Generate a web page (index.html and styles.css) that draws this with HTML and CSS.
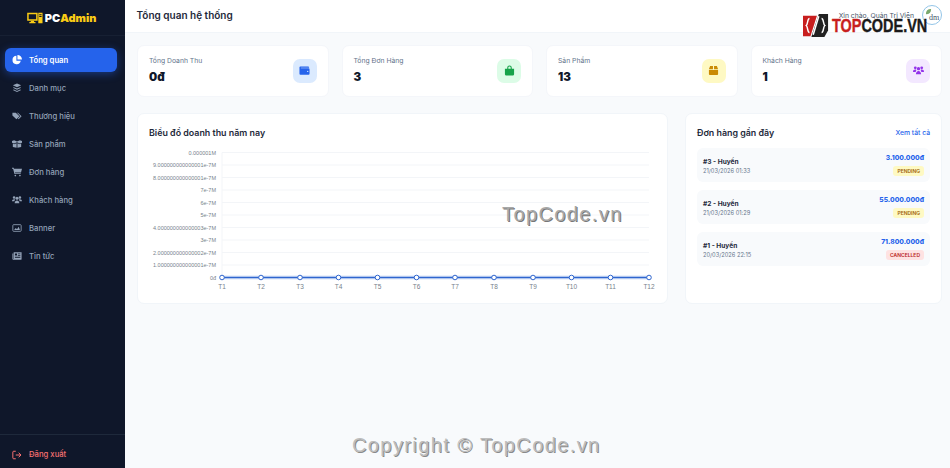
FILE: index.html
```html
<!DOCTYPE html>
<html lang="vi">
<head>
<meta charset="utf-8">
<title>PCAdmin</title>
<link rel="stylesheet" href="styles.css">
</head>
<body>
<div class="app">
  <aside class="sidebar">
    <div class="brand">
      <svg class="brand-icon" viewBox="0 0 17 12"><path fill="none" stroke="#facc15" stroke-width="1.6" d="M1 1.300h9.500v6.800H1z"/><path fill="#facc15" d="M4 9h3.500v1.300H9v1.200H2.500v-1.200H4zM12 .5h4.500v11H12z"/><path fill="#0f172a" d="M13 2h2.500v1H13zM13 4h2.500v1H13z"/></svg>
      <span class="brand-pc">PC</span><span class="brand-admin">Admin</span>
    </div>
    <nav class="nav">
      <a class="nav-item active"><svg class="nav-icon" viewBox="0 0 12 12"><path fill="currentColor" d="M5.300 1a5 5 0 1 0 5.200 6H5.300zM6.500 0v5.500H12A5.600 5.600 0 0 0 6.500 0z"/></svg>Tổng quan</a>
      <a class="nav-item"><svg class="nav-icon" viewBox="0 0 12 12"><path fill="currentColor" d="M6 .5l5 2.300-5 2.300-5-2.300zM2.300 5L6 6.700 9.700 5 11 5.700 6 8 1 5.700zM2.300 7.800L6 9.500l3.700-1.700 1.300.7-5 2.300-5-2.300z"/></svg>Danh mục</a>
      <a class="nav-item"><svg class="nav-icon" viewBox="0 0 12 12"><path fill="currentColor" d="M.5 2h4l4.500 4.300-3.700 3.700L.5 5.500zM6 2h1l4.500 4.300L8 10l-1-.7 3-3z"/></svg>Thương hiệu</a>
      <a class="nav-item"><svg class="nav-icon" viewBox="0 0 12 12"><path fill="currentColor" d="M0 2.500L2.500 1.500 6 3l3.500-1.500L12 2.500v2L9.500 5.500 6 4 2.500 5.500 0 4.500zM1 5.500l1.500.8L5.500 5v5.500L1 9.500zM11 5.500l-1.500.8L6.500 5v5.500L11 9.500z"/></svg>Sản phẩm</a>
      <a class="nav-item"><svg class="nav-icon" viewBox="0 0 12 12"><path fill="currentColor" d="M0 1h2l.4 1H12l-1.200 4.500H3.500l.3 1H10.500v1H3L1.300 2H0z"/><circle fill="currentColor" cx="4" cy="10.300" r="1"/><circle fill="currentColor" cx="9.500" cy="10.300" r="1"/></svg>Đơn hàng</a>
      <a class="nav-item"><svg class="nav-icon" viewBox="0 0 12 12"><g fill="currentColor"><circle cx="2.500" cy="3" r="1.500"/><circle cx="9.500" cy="3" r="1.500"/><circle cx="6" cy="4" r="1.800"/><path d="M0 7.500C0 5.800 1 5 2.500 5c.5 0 1 .2 1.300.4-.5.500-.8 1.300-.8 2.100zM12 7.500c0-1.700-1-2.500-2.500-2.500-.5 0-1 .2-1.300.4.500.5.800 1.300.8 2.100zM3.200 10c0-2 1.200-3.500 2.800-3.500S8.800 8 8.800 10z"/></g></svg>Khách hàng</a>
      <a class="nav-item"><svg class="nav-icon" viewBox="0 0 12 12"><rect x="1" y="2" width="10" height="8" rx="1" fill="none" stroke="currentColor"/><path fill="currentColor" d="M2.500 8.500l2-2.500 1.500 1.500L8 4.500l1.500 4z"/></svg>Banner</a>
      <a class="nav-item"><svg class="nav-icon" viewBox="0 0 12 12"><path fill="currentColor" fill-rule="evenodd" d="M2 1.500h9.500v8a1 1 0 0 1-1 1H1.500A1.200 1.200 0 0 1 .5 9.300V3H1.500v6.500H2zM3.500 3v2.500H6V3zM7 3v1h3V3zM7 5v1h3V5zM3.500 7v1H10V7z"/></svg>Tin tức</a>
    </nav>
    <div class="logout">
      <a class="logout-link"><svg class="nav-icon" viewBox="0 0 12 12"><path fill="none" stroke="currentColor" stroke-width="1.200" d="M4.500 1.500H2a1 1 0 0 0-1 1v7a1 1 0 0 0 1 1h2.500M4.500 6H10.500M8 3.300L10.800 6 8 8.700"/></svg>Đăng xuất</a>
    </div>
  </aside>
  <div class="main">
    <header class="topbar">
      <h1 class="page-title">Tổng quan hệ thống</h1>
      <div class="user">
        <span class="hello">Xin chào, Quản Trị Viên</span>
        <span class="avatar"><svg class="leaf" viewBox="0 0 8 8"><path fill="#7aa86e" d="M1 7C1 3 3 1 7 1 7 5 5 7 1 7z"/></svg><span class="avatar-alt">dm</span></span>
      </div>
    </header>
    <div class="content">
      <section class="stats">
        <div class="stat"><div><div class="stat-label">Tổng Doanh Thu</div><div class="stat-value">0đ</div></div>
          <span class="stat-icon blue"><svg viewBox="0 0 12 12"><path fill="currentColor" d="M1.500 1.500h8.500a1 1 0 0 1 1 1V3H2v.5h8.500a1 1 0 0 1 1 1v5a1 1 0 0 1-1 1h-9a1 1 0 0 1-1-1v-7a1 1 0 0 1 1-1z"/><circle cx="9.500" cy="7" r=".7" fill="#dbeafe"/></svg></span></div>
        <div class="stat"><div><div class="stat-label">Tổng Đơn Hàng</div><div class="stat-value">3</div></div>
          <span class="stat-icon green"><svg viewBox="0 0 12 12"><path fill="currentColor" fill-rule="evenodd" d="M3.500 4V3a2.500 2.500 0 0 1 5 0v1H11v6a1.500 1.500 0 0 1-1.500 1.500h-7A1.500 1.500 0 0 1 1 10V4zM4.700 4h2.600V3a1.300 1.300 0 0 0-2.600 0z"/></svg></span></div>
        <div class="stat"><div><div class="stat-label">Sản Phẩm</div><div class="stat-value">13</div></div>
          <span class="stat-icon yellow"><svg viewBox="0 0 12 12"><path fill="currentColor" d="M2.300 1.200H5.400v3.300H1zM6.600 1.200h3.100L11 4.500H6.600zM1 5.500h10v4.300a1 1 0 0 1-1 1H2a1 1 0 0 1-1-1z"/></svg></span></div>
        <div class="stat"><div><div class="stat-label">Khách Hàng</div><div class="stat-value">1</div></div>
          <span class="stat-icon purple"><svg viewBox="0 0 12 12"><g fill="currentColor"><circle cx="2.500" cy="3" r="1.500"/><circle cx="9.500" cy="3" r="1.500"/><circle cx="6" cy="4" r="1.800"/><path d="M0 7.500C0 5.800 1 5 2.500 5c.5 0 1 .2 1.300.4-.5.500-.8 1.300-.8 2.100zM12 7.500c0-1.700-1-2.500-2.500-2.500-.5 0-1 .2-1.300.4.500.5.800 1.300.8 2.100zM3.200 10c0-2 1.200-3.500 2.800-3.500S8.800 8 8.800 10z"/></g></svg></span></div>
      </section>
      <section class="panels">
        <div class="panel chart-panel">
          <h2 class="panel-title">Biểu đồ doanh thu năm nay</h2>
          <svg class="chart" viewBox="0 0 531 152" width="531" height="152">
            <g class="grid">
              <path d="M85 14.500V139M85 14.500H512M85 27H512M85 39.500H512M85 52H512M85 64.500H512M85 77H512M85 89.500H512M85 102H512M85 114.500H512M85 127H512"/>
            </g>
            <g class="ylabels">
              <text x="79" y="16.500">0.000001M</text>
              <text x="79" y="29">9.000000000000001e-7M</text>
              <text x="79" y="41.500">8.000000000000001e-7M</text>
              <text x="79" y="54">7e-7M</text>
              <text x="79" y="66.500">6e-7M</text>
              <text x="79" y="79">5e-7M</text>
              <text x="79" y="91.500">4.000000000000003e-7M</text>
              <text x="79" y="104">3e-7M</text>
              <text x="79" y="116.500">2.000000000000002e-7M</text>
              <text x="79" y="129">1.000000000000001e-7M</text>
              <text x="79" y="141.500">0đ</text>
            </g>
            <g class="xlabels">
              <text x="85" y="150.500">T1</text><text x="124" y="150.500">T2</text><text x="163" y="150.500">T3</text><text x="201.500" y="150.500">T4</text><text x="240.500" y="150.500">T5</text><text x="279.500" y="150.500">T6</text><text x="318" y="150.500">T7</text><text x="357" y="150.500">T8</text><text x="396" y="150.500">T9</text><text x="434.500" y="150.500">T10</text><text x="473.500" y="150.500">T11</text><text x="512" y="150.500">T12</text>
            </g>
            <path class="line-halo" d="M85 139.500H512"/>
            <path class="line" d="M85 139.500H512"/>
            <g class="dots">
              <circle cx="85" cy="139.500" r="2.300"/><circle cx="124" cy="139.500" r="2.300"/><circle cx="163" cy="139.500" r="2.300"/><circle cx="201.500" cy="139.500" r="2.300"/><circle cx="240.500" cy="139.500" r="2.300"/><circle cx="279.500" cy="139.500" r="2.300"/><circle cx="318" cy="139.500" r="2.300"/><circle cx="357" cy="139.500" r="2.300"/><circle cx="396" cy="139.500" r="2.300"/><circle cx="434.500" cy="139.500" r="2.300"/><circle cx="473.500" cy="139.500" r="2.300"/><circle cx="512" cy="139.500" r="2.300"/>
            </g>
          </svg>
        </div>
        <div class="panel orders-panel">
          <div class="orders-head"><h2 class="panel-title">Đơn hàng gần đây</h2><a class="see-all">Xem tất cả</a></div>
          <div class="orders">
            <div class="order"><div class="order-left"><div class="order-name">#3 - Huyền</div><div class="order-date">21/03/2026 01:33</div></div><div class="order-right"><div class="order-total">3.100.000đ</div><span class="badge pending">PENDING</span></div></div>
            <div class="order"><div class="order-left"><div class="order-name">#2 - Huyền</div><div class="order-date">21/03/2026 01:29</div></div><div class="order-right"><div class="order-total">55.000.000đ</div><span class="badge pending">PENDING</span></div></div>
            <div class="order"><div class="order-left"><div class="order-name">#1 - Huyền</div><div class="order-date">20/03/2026 22:15</div></div><div class="order-right"><div class="order-total">71.800.000đ</div><span class="badge cancelled">CANCELLED</span></div></div>
          </div>
        </div>
      </section>
    </div>
  </div>
</div>
<div class="wm-logo">
  <svg class="wm-mark" viewBox="0 0 28 25"><path fill="#c81e1e" d="M0 2h15L8 24H0z"/><path fill="#222" d="M17 0h10v18l-4 7H9z"/><path fill="none" stroke="#fff" stroke-width="1.600" d="M7 5C4.500 5 5.500 11 3.500 12.500 5.500 14 4.500 20 7 20M17 2.500l-6 20M20 5c2.500 0 1.500 6 3.500 7.500-2 1.500-1 7.500-3.500 7.500"/></svg>
  <span class="wm-text"><span class="wm-top">TOP</span><span class="wm-code">CODE.VN</span></span>
</div>
<div class="wm-mid">TopCode.vn</div>
<div class="wm-bottom">Copyright © TopCode.vn</div>
</body>
</html>
```

FILE: styles.css
```css
* { box-sizing: border-box; margin: 0; padding: 0; }
html, body { height: 100%; overflow: hidden; }
body { font-family: Inter, "Liberation Sans", sans-serif; background: #f8fafc; color: #1e293b; }
.app { display: flex; height: 468px; width: 950px; }

.sidebar { width: 125px; flex: none; background: #0f172a; display: flex; flex-direction: column; }
.brand { height: 36px; display: flex; align-items: center; justify-content: center; font-size: 11px; font-weight: 900; border-bottom: 1px solid #172033; padding-right: 2px; }
.brand-icon { width: 16px; height: 12px; margin-right: 2px; }
.brand-pc { color: #fff; }
.brand-admin { color: #facc15; }
.nav { display: flex; flex-direction: column; gap: 4px; padding: 12px 8px 0 5px; flex: 1; }
.nav-item { height: 24px; display: flex; align-items: center; gap: 7px; padding-left: 7px; border-radius: 6px; font-size: 7.700px; font-weight: 500; color: #94a3b8; }
.nav-item.active { background: #2563eb; color: #fff; font-weight: 600; box-shadow: 0 2px 8px rgba(37, 99, 235, .45); }
.nav-icon { width: 10px; height: 10px; flex: none; }
.logout { border-top: 1px solid #1e293b; height: 34px; padding: 6px 0 0 12px; display: flex; align-items: center; }
.logout-link { display: flex; align-items: center; gap: 7px; font-size: 7.700px; font-weight: 500; color: #f87171; }

.main { flex: 1; display: flex; flex-direction: column; min-width: 0; }
.topbar { height: 33px; background: #fff; border-bottom: 1px solid #f1f5f9; display: flex; align-items: center; justify-content: space-between; padding: 0 8px 2px 11.500px; flex: none; }
.page-title { font-size: 10px; font-weight: 600; color: #1e293b; }
.user { display: flex; align-items: flex-start; gap: 8px; height: 28px; padding-top: 4px; }
.hello { font-size: 6.800px; color: #475569; line-height: 22px; }
.avatar { width: 20px; height: 20px; border-radius: 50%; border: 1px solid #93c5e8; position: relative; display: block; overflow: hidden; background: #fff; }
.leaf { position: absolute; left: 2px; top: 2px; width: 7px; height: 7px; }
.avatar-alt { position: absolute; left: 6px; top: 7px; font-size: 8px; color: #475569; font-family: "Liberation Serif", serif; }

.content { padding: 12px 8px 0 12px; display: flex; flex-direction: column; gap: 17px; }
.stats { display: grid; grid-template-columns: repeat(4, 1fr); gap: 13px; }
.stat { height: 52px; background: #fff; border-radius: 7px; border: 1px solid #f4f6fa; display: flex; align-items: center; justify-content: space-between; padding: 0 11px; }
.stat-label { font-size: 6.800px; color: #64748b; line-height: 10px; }
.stat-value { font-size: 11.500px; font-weight: 900; color: #0f172a; line-height: 17px; margin-top: 3px; }
.stat-icon { width: 24px; height: 24px; border-radius: 7px; display: flex; align-items: center; justify-content: center; margin-top: -1px; }
.stat-icon svg { width: 11px; height: 11px; }
.blue { background: #dbeafe; color: #2563eb; }
.green { background: #dcfce7; color: #16a34a; }
.yellow { background: #fef9c3; color: #ca8a04; }
.purple { background: #f3e8ff; color: #9333ea; }

.panels { display: grid; grid-template-columns: 531px 257px; gap: 17px; margin-top: -1px; }
.panel { height: 191px; background: #fff; border-radius: 7px; border: 1px solid #f1f5f9; }
.chart-panel { padding: 12px 0 0; }
.panel-title { font-size: 8.900px; font-weight: 600; color: #1e293b; line-height: 13px; }
.chart-panel .panel-title { padding-left: 11px; }
.chart { display: block; margin: -1px 0 0 -1px; }
.grid path { fill: none; stroke: #f3f5f8; stroke-width: 1; }
.ylabels text { font-size: 5.500px; fill: #777f8c; text-anchor: end; font-family: "Liberation Sans", sans-serif; }
.xlabels text { font-size: 6.500px; fill: #777f8c; text-anchor: middle; font-family: "Liberation Sans", sans-serif; }
.line { stroke: #2f66cf; stroke-width: 1.500; fill: none; }
.line-halo { stroke: #dbe6f8; stroke-width: 4; fill: none; }
.dots circle { fill: #fff; stroke: #2f66cf; stroke-width: 1; }

.orders-panel { padding: 12px 11px 0 11px; }
.orders-head { display: flex; justify-content: space-between; align-items: center; margin-bottom: 9px; }
.see-all { font-size: 6.800px; font-weight: 500; color: #2563eb; }
.orders { display: flex; flex-direction: column; gap: 8px; }
.order { height: 34px; background: #f8fafc; border-radius: 6px; padding: 0 6px; display: flex; justify-content: space-between; align-items: center; }
.order-left { padding-top: 2px; }
.order-name { font-size: 6.600px; font-weight: 700; color: #1e293b; line-height: 10px; }
.order-date { font-size: 5.700px; color: #64748b; line-height: 8px; }
.order-right { display: flex; flex-direction: column; align-items: flex-end; gap: 3px; }
.order-total { font-size: 6.700px; font-weight: 800; color: #2563eb; line-height: 9px; }
.badge { font-size: 5px; font-weight: 600; border-radius: 3px; padding: 0 4px; line-height: 10px; height: 10px; }
.pending { background: #fef9c3; color: #a16207; }
.cancelled { background: #fee2e2; color: #b91c1c; }

.wm-logo { position: absolute; left: 803px; top: 12px; display: flex; align-items: center; height: 26px; }
.wm-mark { width: 26px; height: 25px; flex: none; margin-right: 3px; }
.wm-text { font-family: "Liberation Sans", sans-serif; font-weight: 700; font-size: 19px; white-space: nowrap; transform: scaleX(.76); transform-origin: left center; -webkit-text-stroke: .4px currentColor; margin-top: 1px; }
.wm-top { color: #c81e1e; }
.wm-code { color: #1a1a1a; }
.wm-mid { position: absolute; left: 502px; top: 203px; font-family: "Liberation Sans", sans-serif; font-size: 20px; letter-spacing: 1.400px; color: #a8a8a8; text-shadow: 1px 1px 0 #777; }
.wm-bottom { position: absolute; left: 352px; top: 434px; font-family: "Liberation Sans", sans-serif; font-size: 20px; letter-spacing: 1.400px; color: #bdbdbd; text-shadow: 1px 1px 0 #8a8a8a; }
```
